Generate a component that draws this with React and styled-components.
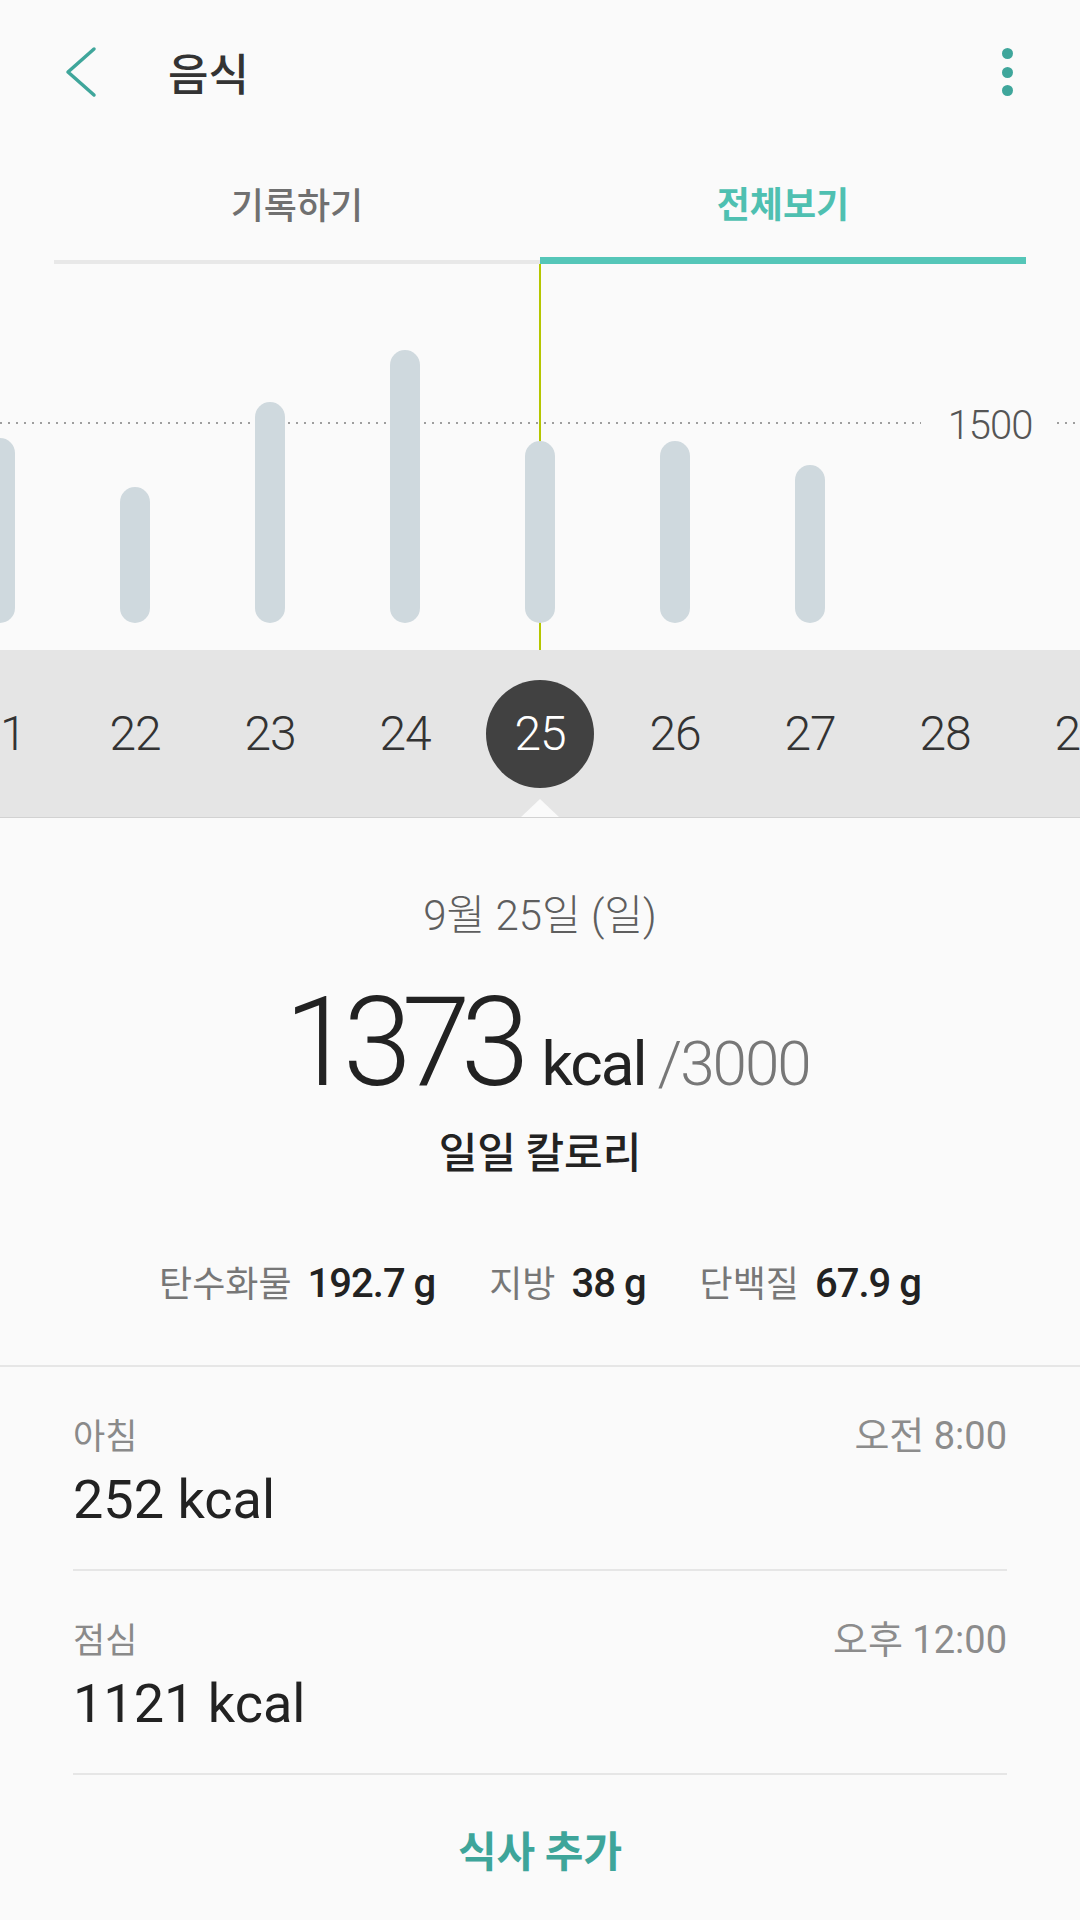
import styled, { createGlobalStyle } from 'styled-components'

//#region styled
const GlobalStyle = createGlobalStyle`
html, body { margin:0; padding:0; background:#fafafa; }
body { font-family: Roboto, "Noto Sans CJK KR", sans-serif; }
`

const Page = styled.div`
width:1080px;
height:1920px;
overflow:hidden;
background:#fafafa;
display:flex;
flex-direction:column;
`

const AppBar = styled.header`
height:144px;
display:flex;
align-items:center;
padding:0 67px 0 62px;
box-sizing:border-box;
`

const BackButton = styled.svg`
width:40px;
height:60px;
flex-shrink:0;
`

const Title = styled.h1`
margin:0 0 0 66px;
font-family: "Noto Sans CJK KR", sans-serif;
font-size:44px;
font-weight:500;
line-height:60px;
color:#333;
`

const MoreButton = styled.div`
margin-left:auto;
display:flex;
flex-direction:column;
gap:7.5px;
`

const Dot = styled.span`
width:11px;
height:11px;
border-radius:50%;
background:#3fa69b;
`

const Tabs = styled.nav`
display:flex;
margin:0 54px;
height:120px;
`

const Tab = styled.div`
flex:1;
display:flex;
align-items:center;
justify-content:center;
padding-top:2px;
box-sizing:border-box;
border-bottom:${(p) => (p.$active ? '7px solid #55c6b8' : '4px solid #e8e8e8')};
font-family: "Noto Sans CJK KR", sans-serif;
font-size:36px;
font-weight:${(p) => (p.$active ? 700 : 500)};
color:${(p) => (p.$active ? '#4fc0b1' : '#707070')};
`

const Chart = styled.svg`
display:block;
width:1080px;
height:386px;
flex-shrink:0;
`

const DateStrip = styled.div`
position:relative;
height:168px;
flex-shrink:0;
box-sizing:border-box;
background:#e5e5e5;
border-bottom:1px solid #d2d2d2;
display:flex;
align-items:center;
overflow:hidden;
`

const DayRow = styled.div`
display:flex;
margin-left:-67.5px;
`

const DayCell = styled.div`
width:135px;
flex-shrink:0;
display:flex;
justify-content:center;
align-items:center;
`

const DayNum = styled.span`
width:108px;
height:108px;
border-radius:50%;
display:flex;
justify-content:center;
align-items:center;
background:${(p) => (p.$selected ? '#414141' : 'transparent')};
color:${(p) => (p.$selected ? '#fff' : '#333')};
font-size:48px;
font-weight:300;
letter-spacing:-1px;
`

const Notch = styled.div`
position:absolute;
left:520px;
bottom:-1px;
width:40px;
height:19px;
background:#fafafa;
clip-path:polygon(50% 0, 100% 100%, 0 100%);
`

const Summary = styled.section`
display:flex;
flex-direction:column;
align-items:center;
padding:73px 0 56px;
border-bottom:2px solid #e6e6e6;
`

const DateLabel = styled.div`
font-size:42px;
line-height:50px;
font-weight:300;
color:#5e5e5e;
`

const BigRow = styled.div`
display:flex;
align-items:baseline;
margin-top:40px;
padding-left:14px;
`

const BigNum = styled.span`
font-size:124px;
line-height:1;
font-weight:300;
color:#222;
letter-spacing:-10px;
`

const Unit = styled.span`
font-size:62px;
line-height:1;
color:#222;
letter-spacing:-2px;
margin-left:22px;
`

const Goal = styled.span`
font-size:62px;
line-height:1;
font-weight:300;
color:#777;
letter-spacing:-2px;
margin-left:12px;
`

const Caption = styled.div`
margin-top:20px;
font-family: "Noto Sans CJK KR", sans-serif;
font-size:42px;
line-height:50px;
font-weight:500;
color:#222;
`

const Nutrients = styled.div`
margin-top:81px;
display:flex;
align-items:baseline;
gap:54px;
line-height:50px;
`

const Nutrient = styled.div`
display:flex;
align-items:baseline;
gap:16px;
`

const NutrientName = styled.span`
font-family: "Noto Sans CJK KR", sans-serif;
font-size:36px;
color:#777;
`

const NutrientValue = styled.span`
font-size:40px;
font-weight:500;
color:#222;
letter-spacing:-1px;
`

const MealList = styled.div`
padding:0 73px;
`

const MealRow = styled.div`
height:204px;
box-sizing:border-box;
padding-top:45px;
border-bottom:2px solid #e6e6e6;
`

const MealHead = styled.div`
display:flex;
justify-content:space-between;
align-items:baseline;
line-height:44px;
`

const MealName = styled.span`
font-family: "Noto Sans CJK KR", sans-serif;
font-size:35px;
color:#8a8a8a;
`

const MealTime = styled.span`
font-size:38px;
color:#8c8c8c;
`

const MealKcal = styled.div`
margin-top:12px;
font-size:54px;
line-height:60px;
color:#222;
`

const AddMeal = styled.div`
margin-top:44px;
text-align:center;
font-family: "Noto Sans CJK KR", sans-serif;
font-size:42px;
line-height:60px;
font-weight:700;
color:#3ea59a;
`
//#endregion

const Bars = [
    { X: 0, Top: 174 },
    { X: 135, Top: 223 },
    { X: 270, Top: 138 },
    { X: 405, Top: 86 },
    { X: 540, Top: 177 },
    { X: 675, Top: 177 },
    { X: 810, Top: 201 },
]

const Days = [21, 22, 23, 24, 25, 26, 27, 28, 29]

const Meals = [
    { Name: '아침', Time: '오전 8:00', Kcal: '252 kcal' },
    { Name: '점심', Time: '오후 12:00', Kcal: '1121 kcal' },
]

const CalorieChart = () => (
    <Chart viewBox="0 0 1080 386">
        <line x1="540" y1="0" x2="540" y2="386" stroke="#b5c600" strokeWidth="2" />
        <line x1="0" y1="159" x2="921" y2="159" stroke="#9e9e9e" strokeWidth="2" strokeDasharray="2 6" />
        <line x1="1057" y1="159" x2="1080" y2="159" stroke="#9e9e9e" strokeWidth="2" strokeDasharray="2 6" />
        <text x="990" y="175" textAnchor="middle" fontFamily="Roboto, sans-serif" fontSize="40" fontWeight="300" fill="#555" letterSpacing="-1">1500</text>
        {Bars.map((b) => (
            <rect key={b.X} x={b.X - 15} y={b.Top} width="30" height={359 - b.Top} rx="15" fill="#cfd9de" />
        ))}
    </Chart>
)

const App = () => {
    return (
        <Page>
            <GlobalStyle />
            <AppBar>
                <BackButton viewBox="0 0 40 60">
                    <polyline points="32,7 6,30 32,53" fill="none" stroke="#3fa69b" strokeWidth="3.5" strokeLinecap="round" strokeLinejoin="round" />
                </BackButton>
                <Title>음식</Title>
                <MoreButton>
                    <Dot />
                    <Dot />
                    <Dot />
                </MoreButton>
            </AppBar>

            <Tabs>
                <Tab>기록하기</Tab>
                <Tab $active>전체보기</Tab>
            </Tabs>

            <CalorieChart />

            <DateStrip>
                <DayRow>
                    {Days.map((d) => (
                        <DayCell key={d}>
                            <DayNum $selected={d === 25}>{d}</DayNum>
                        </DayCell>
                    ))}
                </DayRow>
                <Notch />
            </DateStrip>

            <Summary>
                <DateLabel>9월 25일 (일)</DateLabel>
                <BigRow>
                    <BigNum>1373</BigNum>
                    <Unit>kcal</Unit>
                    <Goal>/3000</Goal>
                </BigRow>
                <Caption>일일 칼로리</Caption>
                <Nutrients>
                    <Nutrient>
                        <NutrientName>탄수화물</NutrientName>
                        <NutrientValue>192.7 g</NutrientValue>
                    </Nutrient>
                    <Nutrient>
                        <NutrientName>지방</NutrientName>
                        <NutrientValue>38 g</NutrientValue>
                    </Nutrient>
                    <Nutrient>
                        <NutrientName>단백질</NutrientName>
                        <NutrientValue>67.9 g</NutrientValue>
                    </Nutrient>
                </Nutrients>
            </Summary>

            <MealList>
                {Meals.map((m) => (
                    <MealRow key={m.Name}>
                        <MealHead>
                            <MealName>{m.Name}</MealName>
                            <MealTime>{m.Time}</MealTime>
                        </MealHead>
                        <MealKcal>{m.Kcal}</MealKcal>
                    </MealRow>
                ))}
            </MealList>

            <AddMeal>식사 추가</AddMeal>
        </Page>
    )
}

export default App
